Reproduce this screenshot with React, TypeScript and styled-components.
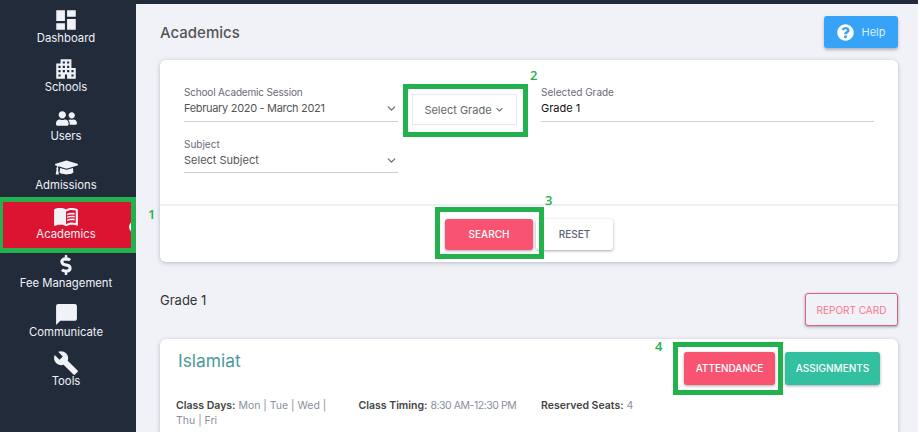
import React from "react";
import styled, { createGlobalStyle } from "styled-components";
import {
  MdDashboard,
  MdApartment,
  MdMenuBook,
  MdChatBubble,
  MdBuild,
  MdKeyboardArrowDown,
} from "react-icons/md";
import { FaGraduationCap, FaQuestionCircle, FaUserFriends, FaDollarSign } from "react-icons/fa";
import { FiChevronDown } from "react-icons/fi";

const GlobalStyle = createGlobalStyle`
  html, body {
    margin: 0;
    padding: 0;
    background: #fff;
  }
  * {
    box-sizing: border-box;
  }
`;

const Frame = styled.div`
  position: relative;
  display: flex;
  width: 918px;
  height: 432px;
  overflow: hidden;
  font-family: Inter, "Open Sans", sans-serif;
  background: #f0f2f7;
  border-top: 4px solid #222b3a;
`;

const Sidebar = styled.nav`
  flex: 0 0 136px;
  display: flex;
  flex-direction: column;
  background: #222b3a;
`;

const NavItem = styled.div<{ $active?: boolean }>`
  position: relative;
  display: flex;
  flex-direction: column;
  align-items: center;
  height: 49px;
  padding: 4px 4px 0 0;
  color: #f0f2f7;
  font-size: 11.3px;
  line-height: 13px;
  background: ${({ $active }) => ($active ? "#dc1431" : "transparent")};
`;

const IconSlot = styled.span`
  display: flex;
  align-items: center;
  justify-content: center;
  height: 24px;
`;

const Notch = styled.span`
  position: absolute;
  top: 21px;
  right: 0;
  width: 7px;
  height: 12px;
  border-radius: 6px 0 0 6px;
  background: #f0f2f7;
`;

const Main = styled.main`
  flex: 1;
  display: flex;
  flex-direction: column;
  padding: 12px 20px 0 24px;
  min-width: 0;
`;

const TitleRow = styled.div`
  display: flex;
  align-items: center;
  justify-content: space-between;
  height: 32px;
  margin-bottom: 12px;
`;

const PageTitle = styled.h1`
  margin: 0;
  font-size: 15px;
  font-weight: 500;
  color: #555;
`;

const HelpButton = styled.button`
  display: flex;
  align-items: center;
  justify-content: center;
  gap: 8px;
  width: 74px;
  height: 32px;
  padding: 0;
  border: 0;
  border-radius: 3px;
  font: inherit;
  font-size: 11px;
  color: #dcefff;
  background: #36a3f7;
  box-shadow: 0 2px 3px rgba(60, 60, 80, 0.35);
`;

const Card = styled.section`
  border-radius: 6px;
  background: #fff;
  box-shadow: 0 1px 4px rgba(60, 60, 80, 0.3);
`;

const FilterGrid = styled.div`
  display: grid;
  grid-template-columns: 214px 143px 333px;
  grid-template-rows: 52px 46px;
  height: 146px;
  padding: 26px 0 0 24px;
  border-bottom: 2px solid #eef0f5;
`;

const Field = styled.div<{ $column: number; $height: number }>`
  grid-column: ${({ $column }) => $column};
  display: flex;
  flex-direction: column;
  height: ${({ $height }) => $height}px;
  border-bottom: 1px solid #cfcfcf;
`;

const FieldLabel = styled.label<{ $tight?: boolean }>`
  font-size: 10px;
  line-height: 13px;
  letter-spacing: ${({ $tight }) => ($tight ? "-0.17px" : "0")};
  color: #6b6b78;
`;

const FieldValue = styled.div<{ $dark?: boolean; $tight?: boolean }>`
  display: flex;
  align-items: center;
  justify-content: space-between;
  margin-top: 1px;
  font-size: 11px;
  line-height: 17px;
  letter-spacing: ${({ $tight }) => ($tight ? "-0.32px" : "0")};
  color: ${({ $dark }) => ($dark ? "#111" : "#555")};

  svg {
    color: #666;
  }
`;

const GradeCell = styled.div`
  padding: 8px 0 0 14px;
`;

const GradeButton = styled.div`
  display: flex;
  align-items: center;
  justify-content: center;
  gap: 1px;
  width: 105px;
  height: 31px;
  padding-left: 1px;
  border: 1px solid #e8e9f0;
  font-size: 11px;
  color: #666;
`;

const CardFooter = styled.div`
  display: flex;
  justify-content: center;
  gap: 3px;
  height: 56px;
  padding-top: 13px;
`;

const ActionButton = styled.button<{ $tone: "danger" | "plain" | "teal"; $width: number; $height: number }>`
  width: ${({ $width }) => $width}px;
  height: ${({ $height }) => $height}px;
  padding: 0 0 1px;
  border: 0;
  border-radius: 3px;
  font: inherit;
  font-size: 10px;
  font-weight: 500;
  color: ${({ $tone }) => ($tone === "plain" ? "#5b6270" : "#fff")};
  background: ${({ $tone }) =>
    $tone === "danger" ? "#f95372" : $tone === "teal" ? "#33c0a0" : "#fff"};
  box-shadow: 0 1px 3px rgba(60, 60, 80, 0.45);
`;

const GradeRow = styled.div`
  display: flex;
  align-items: center;
  justify-content: space-between;
  height: 33px;
  margin: 31px 0 13px;
`;

const GradeTitle = styled.h2`
  margin: 0 0 19px;
  font-size: 13px;
  font-weight: 400;
  color: #333;
`;

const ReportButton = styled.button`
  width: 93px;
  height: 33px;
  padding: 0;
  border: 1px solid #e0607a;
  border-radius: 3px;
  font: inherit;
  font-size: 10px;
  color: #f9768e;
  background: #f0f2f7;
  box-shadow: 0 1px 3px rgba(60, 60, 80, 0.45);
`;

const ClassCard = styled(Card)`
  flex: 1;
  padding: 13px 18px 0 16px;
  border-radius: 6px 6px 0 0;
`;

const ClassHead = styled.div`
  display: flex;
  align-items: flex-start;
  justify-content: space-between;
  height: 46px;
`;

const ClassName = styled.h3`
  margin: 0 0 0 2px;
  font-size: 17.4px;
  line-height: 17px;
  font-weight: 400;
  color: #4a9a9a;
`;

const ClassActions = styled.div`
  display: flex;
  gap: 10px;
`;

const Details = styled.div`
  display: grid;
  grid-template-columns: repeat(3, 182.5px);
`;

const Detail = styled.p`
  width: 170px;
  margin: 0;
  font-size: 10.5px;
  line-height: 15px;
  color: #8a8f9c;

  b {
    font-weight: 600;
    color: #444;
  }
`;

const TightText = styled.span`
  letter-spacing: -0.45px;
`;

const Annotation = styled.div<{ $x: number; $y: number; $w: number; $h: number; $left?: number }>`
  position: absolute;
  left: ${({ $x }) => $x}px;
  top: ${({ $y }) => $y - 4}px;
  width: ${({ $w }) => $w}px;
  height: ${({ $h }) => $h}px;
  border: 5px solid #22b14c;
  border-left-width: ${({ $left }) => $left ?? 5}px;
  pointer-events: none;
`;

const AnnotationNumber = styled.span<{ $x: number; $y: number }>`
  position: absolute;
  left: ${({ $x }) => $x}px;
  top: ${({ $y }) => $y - 4}px;
  font-family: "Open Sans", sans-serif;
  font-size: 13px;
  font-weight: 600;
  line-height: 13px;
  color: #22b14c;
`;

const navItems = [
  { label: "Dashboard", icon: <MdDashboard size={26} /> },
  { label: "Schools", icon: <MdApartment size={26} /> },
  { label: "Users", icon: <FaUserFriends size={21} /> },
  { label: "Admissions", icon: <FaGraduationCap size={23} /> },
  { label: "Academics", icon: <MdMenuBook size={26} />, active: true },
  { label: "Fee Management", icon: <FaDollarSign size={20} /> },
  { label: "Communicate", icon: <MdChatBubble size={25} /> },
  { label: "Tools", icon: <MdBuild size={26} /> },
];

export default function App() {
  return (
    <>
      <GlobalStyle />
      <Frame>
        <Sidebar>
          {navItems.map((item) => (
            <NavItem key={item.label} $active={item.active}>
              <IconSlot>{item.icon}</IconSlot>
              {item.label}
              {item.active && <Notch />}
            </NavItem>
          ))}
        </Sidebar>

        <Main>
          <TitleRow>
            <PageTitle>Academics</PageTitle>
            <HelpButton>
              <FaQuestionCircle size={17} color="#fff" />
              Help
            </HelpButton>
          </TitleRow>

          <Card>
            <FilterGrid>
              <Field $column={1} $height={36}>
                <FieldLabel $tight>School Academic Session</FieldLabel>
                <FieldValue $tight>
                  February 2020 - March 2021
                  <FiChevronDown size={13} />
                </FieldValue>
              </Field>
              <GradeCell>
                <GradeButton>
                  Select Grade
                  <MdKeyboardArrowDown size={13} />
                </GradeButton>
              </GradeCell>
              <Field $column={3} $height={36}>
                <FieldLabel>Selected Grade</FieldLabel>
                <FieldValue $dark>Grade 1</FieldValue>
              </Field>
              <Field $column={1} $height={35}>
                <FieldLabel>Subject</FieldLabel>
                <FieldValue>
                  Select Subject
                  <FiChevronDown size={13} />
                </FieldValue>
              </Field>
            </FilterGrid>
            <CardFooter>
              <ActionButton $tone="danger" $width={88} $height={31}>SEARCH</ActionButton>
              <ActionButton $tone="plain" $width={77} $height={31}>RESET</ActionButton>
            </CardFooter>
          </Card>

          <GradeRow>
            <GradeTitle>Grade 1</GradeTitle>
            <ReportButton>REPORT CARD</ReportButton>
          </GradeRow>

          <ClassCard>
            <ClassHead>
              <ClassName>Islamiat</ClassName>
              <ClassActions>
                <ActionButton $tone="danger" $width={91} $height={33}>ATTENDANCE</ActionButton>
                <ActionButton $tone="teal" $width={95} $height={33}>ASSIGNMENTS</ActionButton>
              </ClassActions>
            </ClassHead>
            <Details>
              <Detail><b>Class Days:</b> Mon | Tue | Wed | Thu | Fri</Detail>
              <Detail><b>Class Timing:</b> <TightText>8:30 AM-12:30 PM</TightText></Detail>
              <Detail><b>Reserved Seats:</b> 4</Detail>
            </Details>
          </ClassCard>
        </Main>

        <Annotation $x={0} $y={197} $w={136} $h={56} $left={3} />
        <Annotation $x={403} $y={84} $w={125} $h={53} />
        <Annotation $x={435} $y={207} $w={109} $h={52} />
        <Annotation $x={673} $y={342} $w={110} $h={53} />
        <AnnotationNumber $x={148} $y={208}>1</AnnotationNumber>
        <AnnotationNumber $x={530} $y={69}>2</AnnotationNumber>
        <AnnotationNumber $x={545} $y={194}>3</AnnotationNumber>
        <AnnotationNumber $x={655} $y={340}>4</AnnotationNumber>
      </Frame>
    </>
  );
}
